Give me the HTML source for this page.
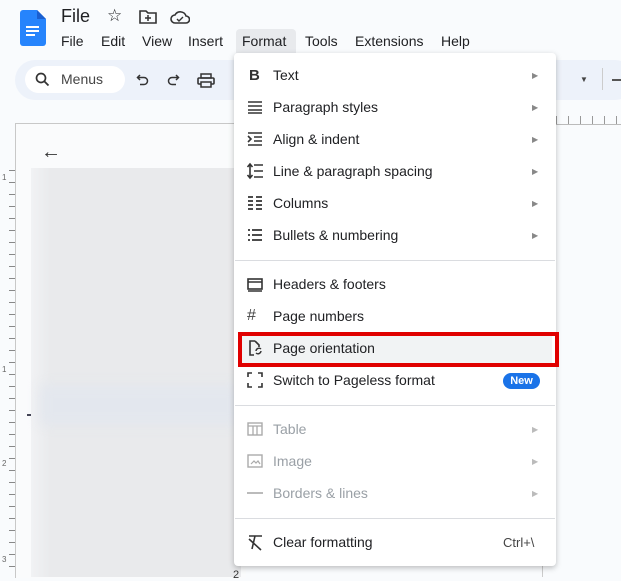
<!DOCTYPE html>
<html><head><style>
body{margin:0;width:621px;height:577px;overflow:hidden;background:#f9fbfd;font-family:"Liberation Sans",sans-serif;position:relative;color:#202124}
.a{position:absolute}
.mi{position:absolute;left:273px;font-size:14px;color:#202124}
.ic{position:absolute;left:246px;width:18px;height:18px}
.ar{position:absolute;left:532px;font-size:8px;color:#888}
.dis{color:#9aa0a6}
.sep{position:absolute;left:235px;width:320px;height:1px;background:#dadce0}
</style></head><body>
<svg class="a" style="left:20px;top:10px" width="26" height="36" viewBox="0 0 26 36"><path d="M3 0h14l9 9v24a3 3 0 0 1-3 3H3a3 3 0 0 1-3-3V3a3 3 0 0 1 3-3z" fill="#2684fc"/><path d="M17 0v9h9z" fill="#1a5fd0"/><rect x="6" y="16" width="13" height="2" fill="#fff"/><rect x="6" y="20" width="13" height="2" fill="#fff"/><rect x="6" y="24" width="9" height="2" fill="#fff"/></svg>
<div class="a" style="left:61px;top:6px;font-size:18px">File</div>
<div class="a" style="left:107px;top:6px;font-size:17px">☆</div>
<svg class="a" style="left:139px;top:10px" width="18" height="14" viewBox="0 0 18 14"><path d="M1 1h6l2 2h8v10H1z" fill="none" stroke="#333" stroke-width="1.6"/><path d="M9 5v6M6 8h6" stroke="#333" stroke-width="1.5"/></svg>
<svg class="a" style="left:170px;top:10px" width="20" height="14" viewBox="0 0 20 14"><path d="M5 13a4 4 0 0 1 0-8 6 6 0 0 1 11 1 3.5 3.5 0 0 1 0 7z" fill="none" stroke="#333" stroke-width="1.6"/><path d="M7 9l2 2 4-4" fill="none" stroke="#333" stroke-width="1.4"/></svg>
<div class="a" style="left:236px;top:29px;width:60px;height:24px;background:#e8eaed;border-radius:4px 4px 0 0"></div>
<div class="a" style="top:33px;left:61px;font-size:14px;word-spacing:0">
<span style="position:absolute;left:0">File</span><span style="position:absolute;left:40px">Edit</span><span style="position:absolute;left:81px">View</span><span style="position:absolute;left:127px">Insert</span><span style="position:absolute;left:181px">Format</span><span style="position:absolute;left:244px">Tools</span><span style="position:absolute;left:294px">Extensions</span><span style="position:absolute;left:380px">Help</span></div>
<div class="a" style="left:15px;top:60px;width:620px;height:40px;background:#edf2fa;border-radius:20px"></div>
<div class="a" style="left:25px;top:66px;width:100px;height:27px;background:#fff;border-radius:14px"></div>
<svg class="a" style="left:35px;top:72px" width="15" height="15" viewBox="0 0 15 15"><circle cx="6" cy="6" r="4.5" fill="none" stroke="#333" stroke-width="1.7"/><path d="M9.5 9.5l4 4" stroke="#333" stroke-width="1.8"/></svg>
<div class="a" style="left:61px;top:71px;font-size:14px;color:#444">Menus</div>
<svg class="a" style="left:136px;top:73px" width="14" height="14" viewBox="0 0 14 14"><path d="M4 2L1.5 4.5 4 7" fill="none" stroke="#333" stroke-width="1.5"/><path d="M1.5 4.5H8a3.5 3.5 0 0 1 0 7H4" fill="none" stroke="#333" stroke-width="1.5"/></svg>
<svg class="a" style="left:166px;top:73px" width="14" height="14" viewBox="0 0 14 14"><path d="M10 2l2.5 2.5L10 7" fill="none" stroke="#333" stroke-width="1.5"/><path d="M12.5 4.5H6a3.5 3.5 0 0 0 0 7h4" fill="none" stroke="#333" stroke-width="1.5"/></svg>
<svg class="a" style="left:197px;top:73px" width="18" height="15" viewBox="0 0 18 15"><rect x="1" y="5" width="16" height="6" rx="1" fill="none" stroke="#333" stroke-width="1.6"/><rect x="4" y="1" width="10" height="4" fill="none" stroke="#333" stroke-width="1.5"/><rect x="4" y="9" width="10" height="5" fill="#edf2fa" stroke="#333" stroke-width="1.5"/></svg>
<div class="a" style="left:580px;top:75px;font-size:8px;color:#444">▼</div>
<div class="a" style="left:602px;top:68px;width:1px;height:22px;background:#ccc"></div>
<div class="a" style="left:612px;top:79px;width:9px;height:2px;background:#555"></div>
<div class="a" style="left:556px;top:116px;width:65px;height:8px;background:repeating-linear-gradient(90deg,#999 0 1px,transparent 1px 12px)"></div>
<div class="a" style="left:556px;top:124px;width:65px;height:1px;background:#bbb"></div>
<div class="a" style="left:15px;top:123px;width:230px;height:454px;background:#fafbfc;border-left:1px solid #c8c8c8;border-top:1px solid #c8c8c8"></div>
<div class="a" style="left:41px;top:141px;font-size:20px;color:#333">←</div>
<div class="a" style="left:31px;top:168px;width:210px;height:409px;background:linear-gradient(90deg,#f1f2f4,#e9eaec 20px)"></div>
<div class="a" style="left:40px;top:385px;width:200px;height:40px;background:#e3e7ee;filter:blur(6px)"></div>
<div class="a" style="left:0;top:170px;width:15px;height:407px;background:repeating-linear-gradient(180deg,#888 0 1px,transparent 1px 12px);clip-path:inset(0 0 0 9px)"></div>
<div class="a" style="left:2px;top:173px;font-size:8px;color:#666">1</div>
<div class="a" style="left:2px;top:365px;font-size:8px;color:#666">1</div>
<div class="a" style="left:2px;top:459px;font-size:8px;color:#666">2</div>
<div class="a" style="left:2px;top:555px;font-size:8px;color:#666">3</div>
<div class="a" style="left:27px;top:414px;width:4px;height:2px;background:#445"></div>
<div class="a" style="left:542px;top:125px;width:1px;height:452px;background:#ccc"></div>
<div class="a" style="left:234px;top:53px;width:322px;height:513px;background:#fff;border-radius:4px;box-shadow:0 2px 6px rgba(0,0,0,.25)"></div>
<div class="a" style="left:249px;top:67px;font-size:15px;font-weight:bold;color:#333">B</div>
<div class="mi" style="top:67px">Text</div><div class="ar" style="top:71px">▶</div>
<svg class="ic" style="top:98px" viewBox="0 0 18 18"><path d="M2 4h14M2 8h14M2 12h14M2 15h14" stroke="#333" stroke-width="1.6"/></svg>
<div class="mi" style="top:99px">Paragraph styles</div><div class="ar" style="top:103px">▶</div>
<svg class="ic" style="top:130px" viewBox="0 0 18 18"><path d="M2 3h14M8 7h8M8 11h8M2 15h14M2 6l3 3-3 3" stroke="#333" stroke-width="1.6" fill="none"/></svg>
<div class="mi" style="top:131px">Align &amp; indent</div><div class="ar" style="top:135px">▶</div>
<svg class="ic" style="top:162px" viewBox="0 0 18 18"><path d="M8 3h9M8 9h9M8 15h9M4 2v14M1.5 5L4 2l2.5 3M1.5 13L4 16l2.5-3" stroke="#333" stroke-width="1.6" fill="none"/></svg>
<div class="mi" style="top:163px">Line &amp; paragraph spacing</div><div class="ar" style="top:167px">▶</div>
<svg class="ic" style="top:194px" viewBox="0 0 18 18"><path d="M2 3h5M2 7h5M2 11h5M2 15h5M10 3h6M10 7h6M10 11h6M10 15h6" stroke="#333" stroke-width="1.8"/></svg>
<div class="mi" style="top:195px">Columns</div><div class="ar" style="top:199px">▶</div>
<svg class="ic" style="top:226px" viewBox="0 0 18 18"><path d="M2 4h2M2 9h2M2 14h2M6 4h10M6 9h10M6 14h10" stroke="#333" stroke-width="1.8"/></svg>
<div class="mi" style="top:227px">Bullets &amp; numbering</div><div class="ar" style="top:231px">▶</div>
<div class="sep" style="top:260px"></div>
<svg class="ic" style="top:275px" viewBox="0 0 18 18"><rect x="2" y="4" width="14" height="10" fill="none" stroke="#333" stroke-width="1.6"/><path d="M2 7h14M2 16h14" stroke="#333" stroke-width="1.6"/></svg>
<div class="mi" style="top:276px">Headers &amp; footers</div>
<div class="a" style="left:247px;top:307px;font-size:16px;color:#444">#</div>
<div class="mi" style="top:308px">Page numbers</div>
<div class="a" style="left:240px;top:334px;width:312px;height:29px;background:#f1f3f4"></div>
<div class="a" style="left:238px;top:332px;width:313px;height:27px;border:4px solid #e00000"></div>
<svg class="ic" style="top:339px" viewBox="0 0 18 18"><path d="M9 2H4v14h4M9 2l4 4v2" fill="none" stroke="#333" stroke-width="1.6"/><path d="M10 12a3 3 0 0 1 5-2M15 12a3 3 0 0 1-5 2" fill="none" stroke="#333" stroke-width="1.4"/></svg>
<div class="mi" style="top:340px">Page orientation</div>
<svg class="ic" style="top:371px" viewBox="0 0 18 18"><path d="M2 6V2h4M12 2h4v4M16 12v4h-4M6 16H2v-4" fill="none" stroke="#333" stroke-width="1.6"/></svg>
<div class="mi" style="top:372px">Switch to Pageless format</div>
<div class="a" style="left:503px;top:373px;width:37px;height:16px;background:#1a73e8;border-radius:8px;color:#fff;font-size:11px;font-weight:bold;text-align:center;line-height:16px">New</div>
<div class="sep" style="top:405px"></div>
<svg class="ic" style="top:420px" viewBox="0 0 18 18"><rect x="2" y="3" width="14" height="12" fill="none" stroke="#aaa" stroke-width="1.4"/><path d="M2 6h14M7 6v9M11 6v9" stroke="#aaa" stroke-width="1.3"/></svg>
<div class="mi dis" style="top:421px">Table</div><div class="ar" style="top:425px;color:#bbb">▶</div>
<svg class="ic" style="top:452px" viewBox="0 0 18 18"><rect x="2" y="3" width="14" height="12" fill="none" stroke="#aaa" stroke-width="1.4"/><path d="M5 12l3-3 2 2 2-2 2 3" fill="none" stroke="#aaa" stroke-width="1.2"/></svg>
<div class="mi dis" style="top:453px">Image</div><div class="ar" style="top:457px;color:#bbb">▶</div>
<div class="a" style="left:247px;top:492px;width:16px;height:2px;background:#bbb"></div>
<div class="mi dis" style="top:485px">Borders &amp; lines</div><div class="ar" style="top:489px;color:#bbb">▶</div>
<div class="sep" style="top:518px"></div>
<svg class="ic" style="top:533px" viewBox="0 0 18 18"><path d="M3 3h13M9 3l-3 13M3 6l12 11" stroke="#333" stroke-width="1.6" fill="none"/></svg>
<div class="mi" style="top:534px">Clear formatting</div>
<div class="a" style="left:503px;top:535px;font-size:13px;color:#444">Ctrl+\</div>
<div class="a" style="left:233px;top:569px;font-size:11px;color:#333">2</div>
</body></html>
